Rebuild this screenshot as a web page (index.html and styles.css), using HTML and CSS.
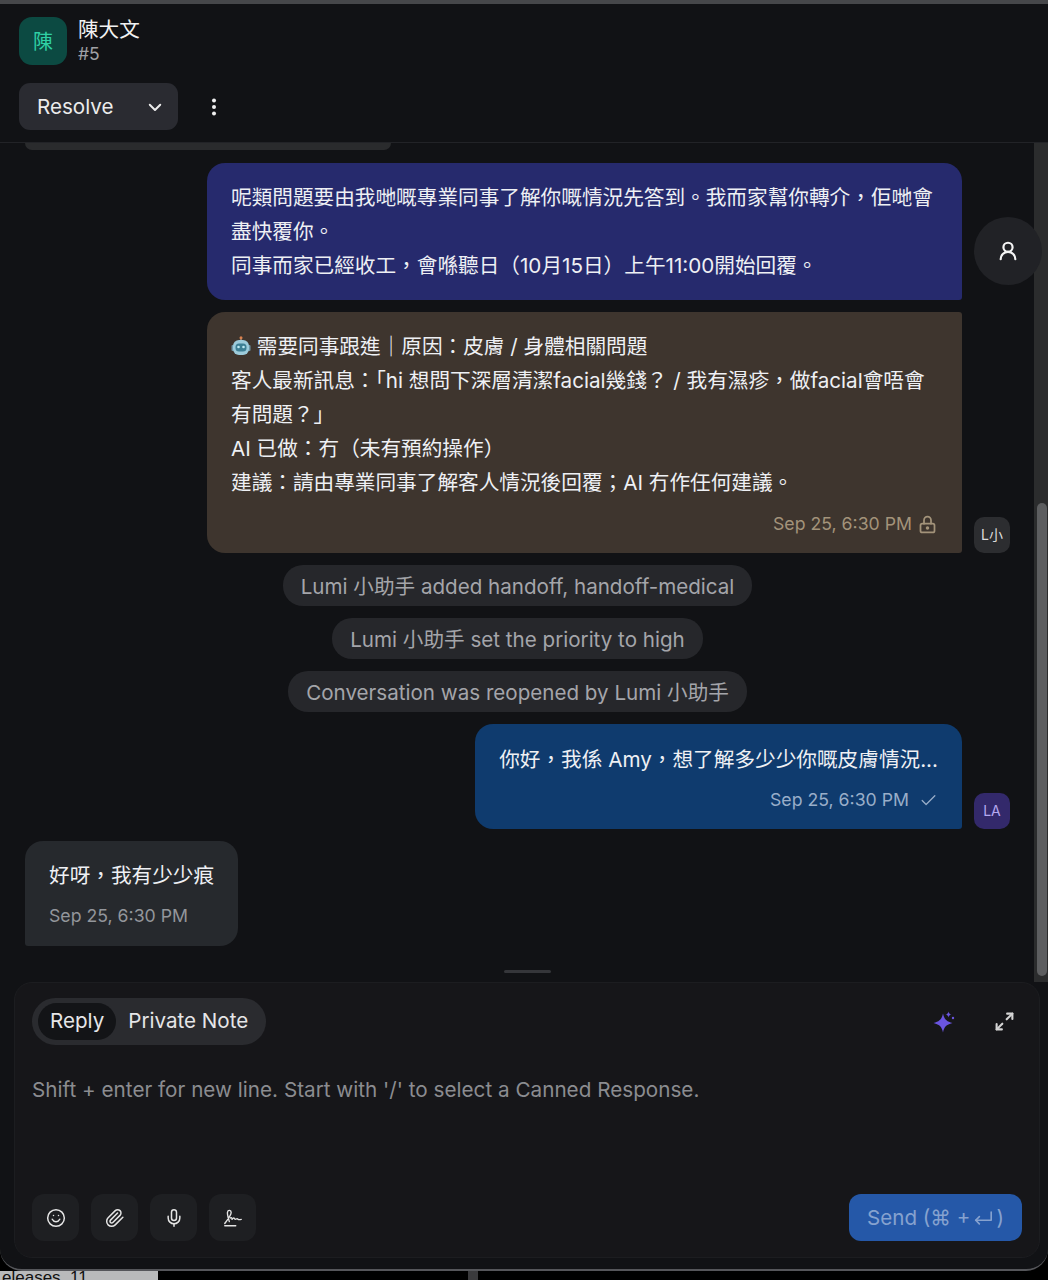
FILE: index.html
```html
<!DOCTYPE html>
<html lang="en">
<head>
  <meta charset="UTF-8" />
  <title>Conversation #5</title>
  <link rel="stylesheet" href="styles.css">
</head>
<body>
  <div class="top-strip"></div>

  <div class="window">
    <!-- Conversation header -->
    <header class="header">
      <div class="contact">
        <div class="contact-avatar">陳</div>
        <div class="contact-info">
          <div class="contact-name">陳大文</div>
          <div class="contact-id">#5</div>
        </div>
      </div>
      <div class="actions">
        <button class="resolve">
          <span>Resolve</span>
          <svg width="18" height="18" viewBox="0 0 24 24" fill="none" stroke="currentColor" stroke-width="2.6" stroke-linecap="round" stroke-linejoin="round"><path d="m5 9 7 7 7-7"/></svg>
        </button>
        <svg class="dots" width="6" height="18" viewBox="0 0 6 18" fill="#f0f0f0"><circle cx="3" cy="2.5" r="2"/><circle cx="3" cy="9" r="2"/><circle cx="3" cy="15.5" r="2"/></svg>
      </div>
    </header>

    <!-- Messages -->
    <div class="thread">
      <div class="messages">
        <div class="clipped-bubble"></div>

        <div class="row out first">
          <div class="bubble bot">
            <p>呢類問題要由我哋嘅專業同事了解你嘅情況先答到。我而家幫你轉介，佢哋會盡快覆你。</p>
            <p>同事而家已經收工，會喺聽日（10月15日）上午11:00開始回覆。</p>
          </div>
          <div class="sender-slot"></div>
        </div>

        <div class="row out">
          <div class="bubble note">
            <p><svg class="robot" width="20" height="20" viewBox="0 0 20 20"><rect x="9" y="1.500" width="2" height="3" fill="#8a7a68"/><circle cx="10" cy="1.800" r="1.500" fill="#d9824f"/><rect x="0.500" y="9" width="2.500" height="6" rx="1" fill="#6f97a8"/><rect x="17" y="9" width="2.500" height="6" rx="1" fill="#6f97a8"/><rect x="2" y="4" width="16" height="15" rx="6" fill="#9ccbdb"/><rect x="4.500" y="7.500" width="11" height="8" rx="3.500" fill="#3d7f94"/><circle cx="7.500" cy="11" r="1.300" fill="#bdeaf5"/><circle cx="12.500" cy="11" r="1.300" fill="#bdeaf5"/></svg> 需要同事跟進｜原因：皮膚 / 身體相關問題</p>
            <p>客人最新訊息：「hi 想問下深層清潔facial幾錢？ / 我有濕疹，做facial會唔會有問題？」</p>
            <p>AI 已做：冇（未有預約操作）</p>
            <p>建議：請由專業同事了解客人情況後回覆；AI 冇作任何建議。</p>
            <div class="meta note-meta">
              <span>Sep 25, 6:30 PM</span>
              <svg width="21" height="21" viewBox="0 0 24 24" fill="none" stroke="currentColor" stroke-width="2" stroke-linecap="round" stroke-linejoin="round"><rect x="4" y="11" width="16" height="10" rx="2"/><path d="M8 11V7a4 4 0 0 1 8 0v4"/><circle cx="12" cy="16" r="1"/></svg>
            </div>
          </div>
          <div class="sender-slot"><div class="sender grey">L小</div></div>
        </div>

        <div class="activity"><span>Lumi 小助手 added handoff, handoff-medical</span></div>
        <div class="activity"><span>Lumi 小助手 set the priority to high</span></div>
        <div class="activity"><span>Conversation was reopened by Lumi 小助手</span></div>

        <div class="row out">
          <div class="bubble agent">
            <p>你好，我係 Amy，想了解多少少你嘅皮膚情況...</p>
            <div class="meta agent-meta">
              <span>Sep 25, 6:30 PM</span>
              <svg width="19" height="19" viewBox="0 0 24 24" fill="none" stroke="currentColor" stroke-width="1.6" stroke-linecap="round" stroke-linejoin="round"><path d="M20 6 9 17l-5-5"/></svg>
            </div>
          </div>
          <div class="sender-slot"><div class="sender purple">LA</div></div>
        </div>

        <div class="row in">
          <div class="bubble customer">
            <p>好呀，我有少少痕</p>
            <div class="meta customer-meta"><span>Sep 25, 6:30 PM</span></div>
          </div>
        </div>

        <div class="drag-handle"></div>
      </div>

      <div class="scrollbar"><div class="scroll-thumb"></div></div>

      <button class="contact-btn">
        <svg width="22" height="22" viewBox="0 0 24 24" fill="none" stroke="#f4f4f4" stroke-width="2.400" stroke-linecap="round" stroke-linejoin="round"><circle cx="12" cy="8" r="5"/><path d="M20 21a8 8 0 0 0-16 0"/></svg>
      </button>
    </div>

    <!-- Reply box -->
    <section class="composer">
      <div class="composer-top">
        <div class="tabs">
          <span class="tab active">Reply</span>
          <span class="tab">Private Note</span>
        </div>
        <div class="composer-tools">
          <svg width="24" height="24" viewBox="0 0 24 24" fill="#6a55e0"><path d="M10 3.500c1.200 5.500 3 7.800 9.500 9.500-6.500 1.700-8.300 4-9.500 9.500C8.800 17 7 14.700.5 13 7 11.300 8.800 9 10 3.500z"/><path d="M15.500 1.500c.4 2 1.100 2.600 3 3-1.900.4-2.600 1-3 3-.4-2-1.100-2.600-3-3 1.900-.4 2.600-1 3-3z"/><circle cx="20" cy="8" r="1.200"/></svg>
          <svg width="21" height="21" viewBox="0 0 24 24" fill="none" stroke="#d4d4d4" stroke-width="2.400" stroke-linecap="round" stroke-linejoin="round"><path d="M15 3h6v6"/><path d="M21 3l-6.500 6.500"/><path d="M9 21H3v-6"/><path d="M3 21l6.500-6.500"/></svg>
        </div>
      </div>

      <div class="placeholder">Shift + enter for new line. Start with '/' to select a Canned Response.</div>

      <div class="composer-bottom">
        <div class="tool-buttons">
          <button class="tool">
            <svg width="20" height="20" viewBox="0 0 24 24" fill="none" stroke="currentColor" stroke-width="1.800" stroke-linecap="round" stroke-linejoin="round"><circle cx="12" cy="12" r="10"/><path d="M7.500 13.500s1.500 3 4.500 3 4.500-3 4.500-3"/><path d="M9 9h.01"/><path d="M15 9h.01"/></svg>
          </button>
          <button class="tool">
            <svg width="20" height="20" viewBox="0 0 24 24" fill="none" stroke="currentColor" stroke-width="1.800" stroke-linecap="round" stroke-linejoin="round"><path d="m21.440 11.050-9.190 9.190a6 6 0 0 1-8.490-8.490l8.570-8.570A4 4 0 1 1 18 8.840l-8.590 8.570a2 2 0 0 1-2.830-2.830l8.490-8.480"/></svg>
          </button>
          <button class="tool">
            <svg width="20" height="20" viewBox="0 0 24 24" fill="none" stroke="currentColor" stroke-width="1.800" stroke-linecap="round" stroke-linejoin="round"><path d="M12 2a3 3 0 0 0-3 3v7a3 3 0 0 0 6 0V5a3 3 0 0 0-3-3z"/><path d="M19 10v2a7 7 0 0 1-14 0v-2"/><path d="M12 19v3"/></svg>
          </button>
          <button class="tool">
            <svg width="22" height="22" viewBox="0 0 24 24" fill="none" stroke="currentColor" stroke-width="1.500" stroke-linecap="round" stroke-linejoin="round"><path d="M3 18C6 14 10 9 10 6c0-3-3.500-3-4-.5-.5 2.500 1 7 2 10.500"/><path d="M9 12c1-1.200 2 .2 2 1.500 1-1.500 2-2 2.500-1 .4.800 1 1.200 2 .6 1-.6 1.500-.3 2 .2s2 .5 3.500.2"/><path d="M3 20.500h12"/></svg>
          </button>
        </div>
        <button class="send">Send (⌘ + <svg class="enter" width="20" height="15" viewBox="0 0 22 16" fill="none" stroke="currentColor" stroke-width="1.800" stroke-linecap="round" stroke-linejoin="round"><path d="M20 2v9H3"/><path d="M7 7l-4 4 4 4"/></svg>)</button>
      </div>
    </section>
  </div>

  <!-- What shows under the window -->
  <div class="under">
    <div class="under-text">eleases&nbsp;&nbsp;11</div>
    <div class="under-gap"></div>
    <div class="under-tick"></div>
  </div>
</body>
</html>
```

FILE: styles.css
```css
* {
  box-sizing: border-box;
}

html,
body {
  height: 100%;
}

body {
  margin: 0;
  width: 1048px;
  height: 1280px;
  overflow: hidden;
  background: #000;
  font-family: Inter, "Noto Sans CJK TC", sans-serif;
  color: #eceded;
  display: flex;
  flex-direction: column;
}

p {
  margin: 0;
}

button {
  font-family: inherit;
  border: none;
  cursor: pointer;
}

.top-strip {
  height: 4px;
  background: #46474a;
  flex-shrink: 0;
}

.window {
  height: 1267px;
  flex-shrink: 0;
  background: #111215;
  border-bottom: 2px solid #55565a;
  border-radius: 0 0 22px 22px;
  overflow: hidden;
  display: flex;
  flex-direction: column;
}

/* header */
.header {
  height: 139px;
  padding: 13px 19px 0;
  border-bottom: 1px solid #222327;
  flex-shrink: 0;
}

.contact {
  display: flex;
  gap: 11px;
  height: 48px;
}

.contact-avatar {
  width: 48px;
  height: 48px;
  border-radius: 13px;
  background: #0c4a42;
  color: #2fd0a5;
  font-size: 20px;
  padding-bottom: 2px;
  display: flex;
  align-items: center;
  justify-content: center;
}

.contact-name {
  font-size: 20.600px;
  line-height: 26px;
  color: #f2f2f2;
}

.contact-id {
  font-size: 17.500px;
  line-height: 22px;
  color: #a0a1a5;
}

.actions {
  display: flex;
  align-items: center;
  gap: 33px;
  margin-top: 18px;
}

.resolve {
  width: 159px;
  height: 47px;
  border-radius: 11px;
  background: #2a2b31;
  color: #ececec;
  font-size: 20.600px;
  padding: 0 14px 0 18px;
  display: flex;
  align-items: center;
  justify-content: space-between;
}

/* message list */
.thread {
  position: relative;
  height: 839px;
  flex-shrink: 0;
  display: flex;
}

.messages {
  flex: 1;
  min-width: 0;
  padding: 0 24px 0 25px;
  display: flex;
  flex-direction: column;
  gap: 12px;
  overflow: hidden;
}

.clipped-bubble {
  width: 366px;
  height: 7px;
  background: #2a2b2d;
  border-radius: 0 0 14px 14px;
  margin-bottom: 1px;
  flex-shrink: 0;
}

.row {
  display: flex;
  gap: 12px;
  align-items: flex-end;
  flex-shrink: 0;
}

.row.out {
  justify-content: flex-end;
}

.bubble {
  font-size: 20.650px;
  line-height: 34px;
  padding: 18px 24px 17px;
  border-radius: 18px;
  color: #eef0f4;
}

.bot {
  width: 755px;
  background: #262a6d;
  border-bottom-right-radius: 3px;
}

.note {
  width: 755px;
  background: #3e352e;
  border-top-right-radius: 3px;
  border-bottom-right-radius: 3px;
}

.robot {
  vertical-align: -2px;
}

.agent {
  background: #0f3b6e;
  border-bottom-right-radius: 3px;
  padding-top: 19px;
}

.customer {
  background: #26292d;
  border-bottom-left-radius: 3px;
}

.meta {
  display: flex;
  align-items: center;
  justify-content: flex-end;
  gap: 5px;
  font-size: 17.700px;
  line-height: 24px;
  margin-top: 12px;
}

.note-meta {
  color: #a3937a;
}

.agent-meta {
  color: #99aec9;
  gap: 10px;
  margin-top: 11px;
}

.customer-meta {
  color: #93969b;
  justify-content: flex-start;
  margin-top: 11px;
  padding-bottom: 1px;
}

.sender-slot {
  width: 36px;
  flex-shrink: 0;
}

.sender {
  width: 36px;
  height: 36px;
  border-radius: 10px;
  font-size: 14px;
  padding-bottom: 2px;
  display: flex;
  align-items: center;
  justify-content: center;
  overflow: hidden;
}

.sender.grey {
  background: #2c2d30;
  color: #dcdcdc;
}

.sender.purple {
  background: #33296b;
  color: #b5a8f0;
}

.activity {
  display: flex;
  justify-content: center;
  flex-shrink: 0;
}

.activity span {
  height: 41px;
  padding: 0 18px 2px;
  border-radius: 20px;
  background: #26272b;
  color: #a4a5aa;
  font-size: 20.600px;
  display: flex;
  align-items: center;
}

.drag-handle {
  width: 47px;
  height: 3px;
  background: #35363a;
  border-radius: 2px;
  margin: 12px 0 0 479px;
  flex-shrink: 0;
}

.scrollbar {
  width: 14px;
  background: #2b2c2d;
  padding-top: 360px;
  padding-bottom: 6px;
  flex-shrink: 0;
}

.scroll-thumb {
  height: 100%;
  margin: 0 1px 0 3px;
  border-radius: 6px;
  background: #5d5e60;
}

.contact-btn {
  position: absolute;
  left: 974px;
  top: 74px;
  width: 68px;
  height: 68px;
  border-radius: 50%;
  background: #212226;
  display: flex;
  align-items: center;
  justify-content: center;
}

/* composer */
.composer {
  margin: 0 8px 0 14px;
  height: 276px;
  padding: 15px 17px 16px;
  background: #161619;
  border: 1px solid #1c1d20;
  border-radius: 18px;
  flex-shrink: 0;
  display: flex;
  flex-direction: column;
}

.composer-top {
  display: flex;
  align-items: center;
  justify-content: space-between;
}

.tabs {
  display: flex;
  align-items: center;
  height: 47px;
  padding: 0 6px;
  border-radius: 24px;
  background: #2a2b2f;
  font-size: 20.600px;
}

.tab {
  height: 37px;
  padding: 0 12px 2px;
  border-radius: 19px;
  display: flex;
  align-items: center;
  color: #e6e6e8;
}

.tab.active {
  background: #131417;
}

.composer-tools {
  display: flex;
  align-items: center;
  gap: 37px;
  padding-right: 7px;
}

.placeholder {
  margin-top: 30px;
  font-size: 20.700px;
  line-height: 30px;
  color: #8b8c90;
  flex: 1;
}

.composer-bottom {
  display: flex;
  align-items: center;
  justify-content: space-between;
}

.tool-buttons {
  display: flex;
  gap: 12px;
}

.tool {
  width: 47px;
  height: 47px;
  border-radius: 12px;
  background: #1e1f22;
  color: #e4e4e4;
  display: flex;
  align-items: center;
  justify-content: center;
}

.send {
  width: 173px;
  height: 47px;
  border-radius: 12px;
  background: #2558a8;
  color: #86a2cf;
  font-size: 20.600px;
  padding-bottom: 2px;
  display: flex;
  align-items: center;
  justify-content: center;
  gap: 3px;
}

/* below the window */
.under {
  flex: 1;
  min-height: 0;
  display: flex;
  overflow: hidden;
}

.under-text {
  width: 158px;
  background: #b9babb;
  color: #111;
  font-family: "Liberation Sans", sans-serif;
  font-size: 17px;
  line-height: 14px;
  padding-left: 2px;
  overflow: hidden;
  white-space: nowrap;
}

.under-gap {
  width: 310px;
}

.under-tick {
  width: 10px;
  background: #3a3a3c;
}
```
